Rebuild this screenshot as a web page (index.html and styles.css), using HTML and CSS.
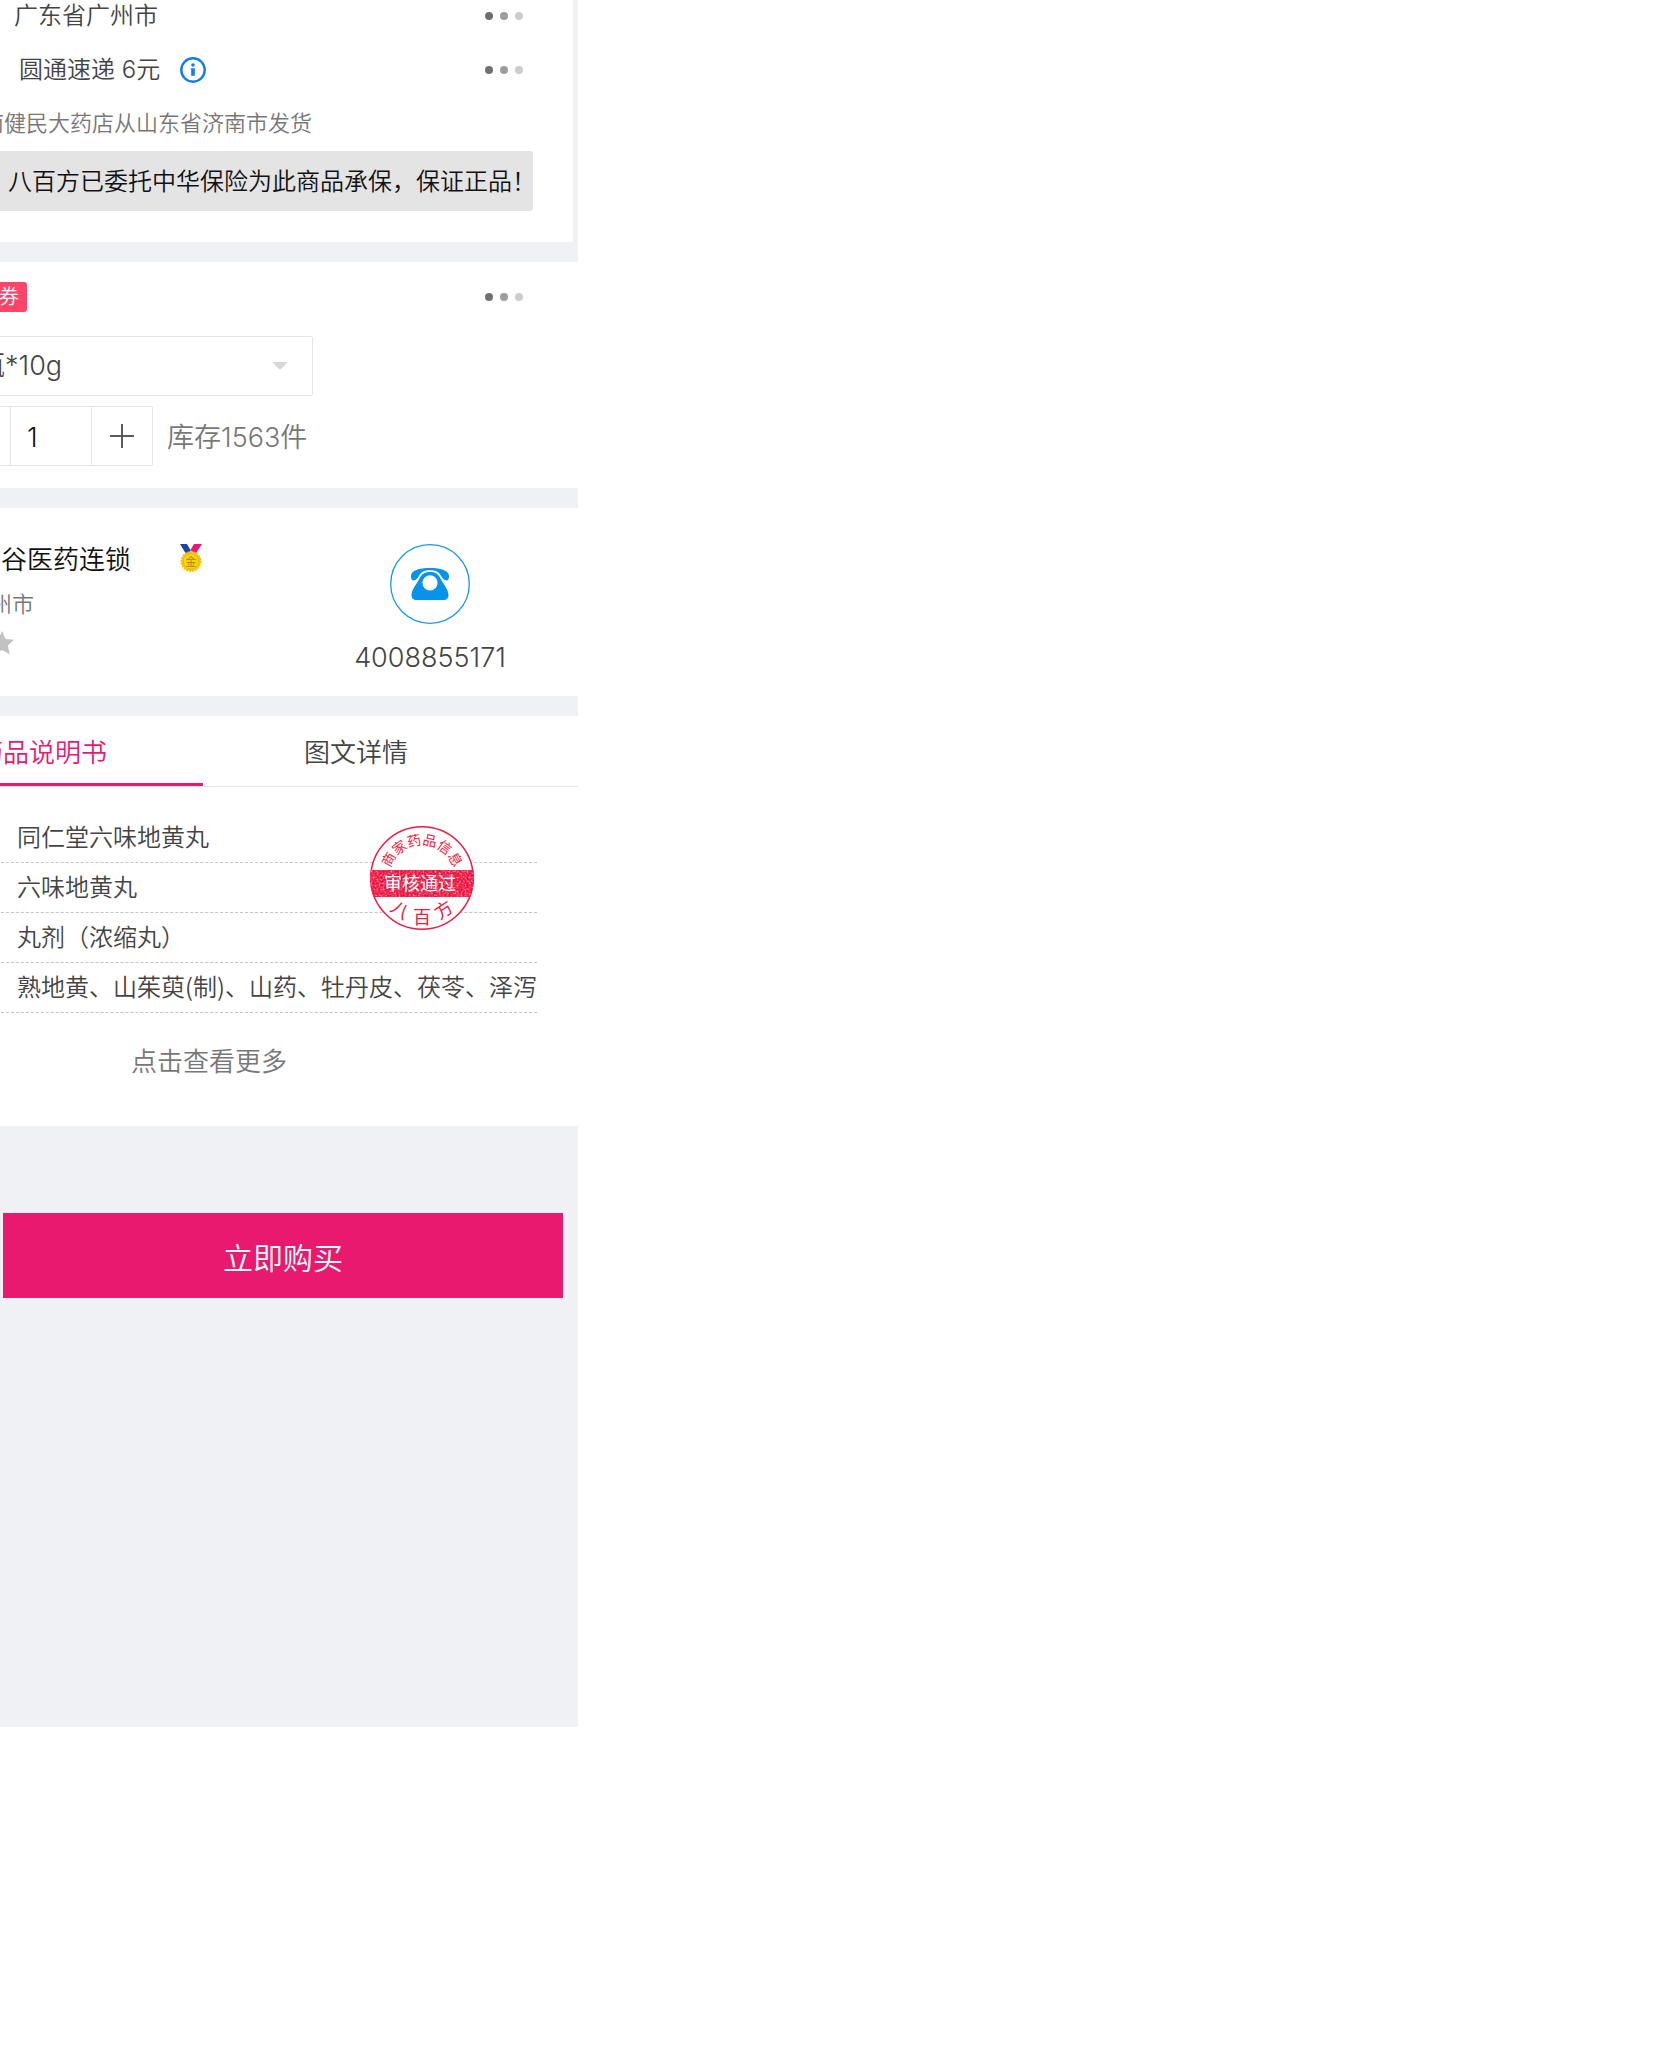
FILE: index.html
```html
<!DOCTYPE html>
<html lang="zh-CN">
<head>
<meta charset="utf-8">
<meta name="viewport" content="width=device-width, initial-scale=1">
<title>同仁堂六味地黄丸</title>
<link rel="stylesheet" href="styles.css">
</head>
<body>
<main class="page">

  <section class="card delivery">
    <div class="row row-address">
      <span>广东省广州市</span>
      <button class="dots" type="button" aria-label="选择地址"><i></i><i></i><i></i></button>
    </div>
    <div class="row row-express">
      <span>圆通速递 6元</span>
      <svg class="info" viewBox="0 0 26 26" aria-hidden="true">
        <circle cx="13" cy="13" r="11.7" fill="none" stroke="#117cec" stroke-width="2.4"/>
        <circle cx="13" cy="8" r="1.8" fill="#117cec"/>
        <path d="M10.8 11.200h4v7.600h-3.600v-6.200h-.4z" fill="#117cec"/>
      </svg>
      <button class="dots" type="button" aria-label="选择快递"><i></i><i></i><i></i></button>
    </div>
    <p class="origin">南健民大药店从山东省济南市发货</p>
    <p class="insurance">八百方已委托中华保险为此商品承保，保证正品！</p>
  </section>

  <section class="card options">
    <div class="row">
      <span class="coupon">券</span>
      <button class="dots" type="button" aria-label="更多优惠"><i></i><i></i><i></i></button>
    </div>
    <div class="spec">
      <select class="spec-select" aria-label="规格"><option>瓶*10g</option></select>
      <svg class="caret" viewBox="0 0 16 8" aria-hidden="true"><path d="M0 0h16L8 8z" fill="#d5d5da"/></svg>
    </div>
    <div class="quantity">
      <div class="stepper">
        <button class="step minus" type="button" aria-label="减少"></button>
        <input class="count" type="text" value="1" aria-label="数量">
        <button class="step plus" type="button" aria-label="增加">
          <svg width="24" height="24" viewBox="0 0 24 24" aria-hidden="true"><path d="M12 0v24M0 12h24" stroke="#5a5a5a" stroke-width="2"/></svg>
        </button>
      </div>
      <span class="stock">库存1563件</span>
    </div>
  </section>

  <section class="card shop">
    <div class="shop-info">
      <div class="shop-title">
        <h2>谷医药连锁</h2>
        <svg class="medal" viewBox="0 0 22 28" aria-hidden="true">
          <path d="M0 0h7l4 7-5 3z" fill="#17479e"/>
          <path d="M22 0h-8l-3.500 6 5 4z" fill="#ee1573"/>
          <circle cx="11" cy="17.500" r="9.700" fill="#f8c90c" stroke="#f6c000" stroke-width="1.500" stroke-dasharray="2 1"/>
          <circle cx="11" cy="17.500" r="7.800" fill="#f9d312" stroke="#e9b400" stroke-width=".8"/>
          <text x="11" y="22" text-anchor="middle" font-size="11" class="medal-text">金</text>
        </svg>
      </div>
      <p class="shop-city">州市</p>
      <svg class="star" viewBox="0 0 24 24" aria-hidden="true"><path d="M12 0l3.600 7.900 8.400.9-6.200 5.800 1.900 8.700L12 19l-7.700 4.300 1.900-8.700L0 8.800l8.400-.9z" fill="#c2c2c2"/></svg>
    </div>
    <a class="phone" href="tel:4008855171">
      <svg width="80" height="80" viewBox="0 0 80 80" aria-hidden="true">
        <circle cx="40" cy="40" r="39.300" fill="none" stroke="#1b98e8" stroke-width="1.300"/>
        <path d="M21 32c0-5.500 8-8 19-8s19 2.500 19 8c0 3-1 4.500-2.500 4.500-2.500 0-4-2.500-6-5.500-2.500-3.500-5-4.800-10.500-4.800S32 27.500 29.500 31c-2 3-3.500 5.500-6 5.500-1.500 0-2.500-1.500-2.500-4.500z" fill="#0793ea"/>
        <path fill-rule="evenodd" d="M40 28c6 0 8.500 2.500 10.500 6.500 2.500 5 8 11 8 16.500 0 3.500-2 5-5 5h-27c-3 0-5-1.500-5-5 0-5.500 5.500-11.500 8-16.500 2-4 4.500-6.500 10.500-6.500zM40 31.200a7.600 7.600 0 1 0 0 15.200 7.600 7.600 0 0 0 0-15.200z" fill="#0793ea"/>
      </svg>
      <span>4008855171</span>
    </a>
  </section>

  <section class="card detail">
    <nav class="tabs">
      <a class="tab tab-active" href="#manual">药品说明书</a>
      <a class="tab tab-images" href="#images">图文详情</a>
    </nav>
    <ul class="facts" id="manual">
      <li>同仁堂六味地黄丸</li>
      <li>六味地黄丸</li>
      <li>丸剂（浓缩丸）</li>
      <li>熟地黄、山茱萸(制)、山药、牡丹皮、茯苓、泽泻</li>
    </ul>
    <svg class="stamp" viewBox="0 0 106 106" role="img" aria-label="审核通过">
      <defs>
        <path id="arc" d="M20 53a33 33 0 0 1 66 0"/>
        <clipPath id="disc"><circle cx="53" cy="53" r="52"/></clipPath>
        <filter id="grain" x="0" y="0" width="1" height="1">
          <feTurbulence type="fractalNoise" baseFrequency=".5" numOctaves="2" seed="4"/>
          <feColorMatrix values="0 0 0 0 1  0 0 0 0 1  0 0 0 0 1  3 0 0 0 -1.300"/>
        </filter>
      </defs>
      <circle cx="53" cy="53" r="51.200" fill="#fff" stroke="#f01a41" stroke-width="1.500"/>
      <g clip-path="url(#disc)">
        <rect x="0" y="45" width="106" height="27" fill="#ee1440"/>
        <rect x="0" y="45" width="106" height="27" filter="url(#grain)" opacity=".5"/>
      </g>
      <g class="stamp-ring" text-anchor="middle">
        <text font-size="14"><textPath href="#arc" startOffset="50%">商家药品信息</textPath></text>
        <text font-size="18" x="53" y="98" transform="rotate(34 53 53)">八</text>
        <text font-size="18" x="53" y="99">百</text>
        <text font-size="18" x="53" y="98" transform="rotate(-34 53 53)">方</text>
      </g>
      <text x="51" y="65" font-size="18" class="stamp-main" text-anchor="middle">审核通过</text>
    </svg>
    <button class="more" type="button">点击查看更多</button>
  </section>

  <div class="buy-bar">
    <button class="buy" type="button">立即购买</button>
  </div>

</main>
</body>
</html>
```

FILE: styles.css
```css
* {
  box-sizing: border-box;
}

body {
  margin: 0;
  overflow-x: hidden;
  background: #fff;
  color: #444;
  font-family: Inter, "Noto Sans CJK SC", sans-serif;
  font-size: 24px;
  font-weight: 350;
  line-height: 32px;
}

h2,
p,
ul {
  margin: 0;
  padding: 0;
  font-size: inherit;
  font-weight: inherit;
}

button,
input,
select {
  margin: 0;
  padding: 0;
  border: 0;
  background: none;
  color: inherit;
  font: inherit;
}

a {
  color: inherit;
  text-decoration: none;
}

svg {
  display: block;
  flex: none;
}

/* The column runs a little past the left edge of the window */
.page {
  display: flex;
  flex-direction: column;
  gap: 20px;
  width: 100%;
  max-width: 602px;
  margin-left: -24px;
  background: #f0f1f5;
}

.card {
  background: #fff;
}

.row {
  display: flex;
  align-items: center;
}

.dots {
  display: flex;
  gap: 7px;
  margin-left: auto;
  margin-right: 10px;
}

.dots i {
  width: 8px;
  height: 8px;
  border-radius: 50%;
  background: #707070;
}

.dots i:nth-child(2) {
  background: #9c9c9c;
}

.dots i:nth-child(3) {
  background: #ccc;
}

/* Delivery */
.delivery {
  padding: 0 40px 31px 0;
  border-right: 5px solid #f0f1f5;
}

.row-address {
  padding-left: 38px;
}

.row-express {
  margin-top: 22px;
  padding-left: 43px;
}

.info {
  width: 26px;
  height: 26px;
  margin-left: 20px;
}

.origin {
  margin-top: 22px;
  padding-left: 6px;
  color: #777;
  font-size: 22px;
  line-height: 30px;
}

.insurance {
  margin-top: 13px;
  padding: 2px 0 0 32px;
  border-radius: 3px;
  background: #e4e4e4;
  color: #111;
  line-height: 58px;
  white-space: nowrap;
}

/* Options */
.options {
  padding: 20px 45px 22px 0;
}

.coupon {
  padding: 0 8px 0 23px;
  border-radius: 3px;
  background: #ff4567;
  color: #fff;
  font-size: 20px;
  line-height: 30px;
}

.spec {
  display: grid;
  align-items: center;
  width: 337px;
  margin-top: 24px;
}

.spec-select,
.caret {
  grid-area: 1 / 1;
}

.spec-select {
  width: 100%;
  height: 60px;
  padding-left: 1px;
  border: 1px solid #e4e4e6;
  border-radius: 2px;
  appearance: none;
  font-size: 27px;
  line-height: 40px;
}

.caret {
  justify-self: end;
  width: 16px;
  height: 8px;
  margin-right: 25px;
  pointer-events: none;
}

.quantity {
  display: flex;
  align-items: center;
  gap: 14px;
  margin-top: 10px;
  font-size: 27px;
}

.stepper {
  display: flex;
  width: 177px;
  height: 60px;
  border: 1px solid #e4e4e6;
  border-radius: 2px;
}

.step {
  display: flex;
  align-items: center;
  justify-content: center;
}

.minus {
  width: 33px;
}

.count {
  flex: 1;
  min-width: 0;
  padding: 4px 0 0 16px;
  border: solid #e4e4e6;
  border-width: 0 1px;
  color: #111;
}

.plus {
  width: 60px;
}

.stock {
  padding-top: 4px;
  color: #777;
}

/* Shop */
.shop {
  display: flex;
  justify-content: space-between;
  padding: 36px 70px 20px 14px;
}

.shop-title {
  display: flex;
  gap: 49px;
  padding-left: 11px;
  color: #111;
  font-size: 26px;
  line-height: 32px;
}

.medal {
  width: 22px;
  height: 28px;
}

.medal-text {
  fill: #a87c00;
}

.shop-city {
  margin: 13px 0 12px;
  color: #777;
  font-size: 22px;
  line-height: 30px;
}

.star {
  width: 24px;
  height: 24px;
}

.phone {
  display: flex;
  flex-direction: column;
  align-items: center;
  gap: 16px;
  min-width: 156px;
  font-size: 27px;
  line-height: 36px;
}

/* Detail */
.detail {
  position: relative;
  padding-bottom: 46px;
}

.tabs {
  display: flex;
  border-bottom: 1px solid #e4e4e6;
  font-size: 26px;
}

.tab {
  padding: 21px 0 14px 101px;
  border-bottom: 3px solid transparent;
}

.tab-active {
  width: 227px;
  padding-left: 1px;
  border-color: #e8196e;
  color: #e8196e;
}

.facts {
  margin: 26px 41px 0 0;
  font-family: "Noto Sans CJK SC", sans-serif;
  list-style: none;
}

.facts li {
  padding: 0 0 4px 41px;
  border-bottom: 1px dashed #c4c4c4;
  line-height: 45px;
  white-space: nowrap;
}

.stamp {
  position: absolute;
  top: 109px;
  right: 103px;
  width: 106px;
  height: 106px;
}

.stamp-ring {
  fill: #f01a41;
  font-weight: 400;
}

.stamp-main {
  fill: #fff;
  font-weight: 400;
}

.more {
  display: block;
  margin: 31px 0 0 155px;
  color: #777;
  font-size: 26px;
  line-height: 36px;
}

/* Purchase */
.buy-bar {
  padding: 67px 15px 429px 27px;
}

.buy {
  display: block;
  width: 100%;
  padding: 6px 0 0;
  background: #e8196e;
  color: #fff;
  font-size: 30px;
  line-height: 79px;
}
```
